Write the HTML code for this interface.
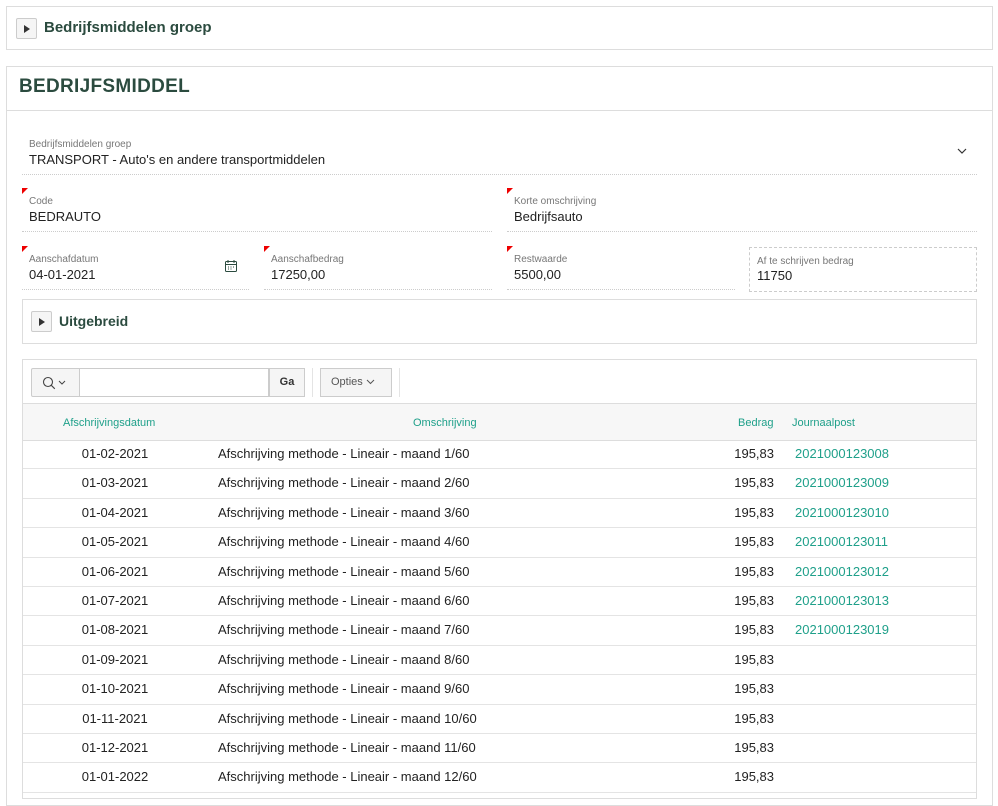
<!DOCTYPE html>
<html><head><meta charset="utf-8"><style>
*{box-sizing:border-box;margin:0;padding:0}
body{width:998px;height:788px;overflow:hidden;background:#fff;font-family:"Liberation Sans",sans-serif;color:#222;position:relative}
.abs{position:absolute}
.box{position:absolute;border:1px solid #ddd;background:#fff}
.tog{position:absolute;width:21px;height:21px;border:1px solid #ccc;border-radius:2px;background:#f5f5f5}
.tog:after{content:"";position:absolute;left:7px;top:6px;border-left:6px solid #333;border-top:4px solid transparent;border-bottom:4px solid transparent}
.h{color:#2b4b3f;font-weight:bold}
.f{position:absolute;border-bottom:1px dotted #ccc}
.lab{position:absolute;left:7px;top:8px;font-size:10px;color:#777}
.val{position:absolute;left:7px;top:21px;font-size:13px;color:#222}
.req:before{content:"";position:absolute;left:0;top:0;border-top:6px solid #e00;border-right:6px solid transparent}
.row{position:absolute;left:23px;width:953px;height:29.4px;border-bottom:1px solid #e4e4e4;font-size:13px}
.row span{position:absolute;top:6px}
.d{left:0;width:184px;text-align:center}
.o{left:195px}
.b{right:202px}
.j{left:772px;color:#1fa08a}
.th{position:absolute;top:13px;font-size:11px;color:#1fa08a}
</style></head><body>
<div class="box" style="left:6px;top:6px;width:987px;height:44px">
<div class="tog" style="left:9px;top:11px"></div>
<div class="abs h" style="left:37px;top:12px;font-size:15px">Bedrijfsmiddelen groep</div>
</div>
<div class="box" style="left:6px;top:66px;width:987px;height:740px">
<div class="abs h" style="left:12px;top:9px;font-size:19px;letter-spacing:0.3px">BEDRIJFSMIDDEL</div>
<div class="abs" style="left:0;top:43px;width:985px;border-top:1px solid #ddd"></div>
</div>
<div class="f" style="left:22px;top:131px;width:955px;height:44px"><div class="lab">Bedrijfsmiddelen groep</div><div class="val">TRANSPORT - Auto's en andere transportmiddelen</div>
<svg class="abs" style="right:10px;top:17px" width="10" height="7" viewBox="0 0 10 7"><path d="M1 1l4 4 4-4" fill="none" stroke="#333" stroke-width="1.2"/></svg></div>
<div class="f req" style="left:22px;top:188px;width:470px;height:44px"><div class="lab">Code</div><div class="val">BEDRAUTO</div></div>
<div class="f req" style="left:507px;top:188px;width:470px;height:44px"><div class="lab">Korte omschrijving</div><div class="val">Bedrijfsauto</div></div>
<div class="f req" style="left:22px;top:246px;width:227px;height:44px"><div class="lab">Aanschafdatum</div><div class="val">04-01-2021</div>
<svg class="abs" style="left:202px;top:13px" width="14" height="14" viewBox="0 0 14 14"><rect x="1.5" y="2.5" width="11" height="10" rx="1" fill="none" stroke="#2b4b3f"/><path d="M1.5 5.5h11M4 1v3M10 1v3" stroke="#2b4b3f"/><path d="M4 8h1M6.5 8h1M9 8h1M4 10h1M6.5 10h1" stroke="#2b4b3f"/></svg></div>
<div class="f req" style="left:264px;top:246px;width:228px;height:44px"><div class="lab">Aanschafbedrag</div><div class="val">17250,00</div></div>
<div class="f req" style="left:507px;top:246px;width:228px;height:44px"><div class="lab">Restwaarde</div><div class="val">5500,00</div></div>
<div class="abs" style="left:749px;top:247px;width:228px;height:45px;border:1px dashed #ccc"><div class="lab">Af te schrijven bedrag</div><div class="val" style="top:20px">11750</div></div>
<div class="box" style="left:22px;top:299px;width:955px;height:45px">
<div class="tog" style="left:8px;top:11px"></div>
<div class="abs h" style="left:36px;top:13px;font-size:14px">Uitgebreid</div>
</div>
<div class="box" style="left:22px;top:359px;width:955px;height:440px">
<div class="abs" style="left:8px;top:8px;width:49px;height:29px;border:1px solid #ccc;background:#f5f5f5;border-radius:2px 0 0 2px">
<svg class="abs" style="left:10px;top:7px" width="26" height="14" viewBox="0 0 26 14"><circle cx="6" cy="6" r="4.5" fill="none" stroke="#444" stroke-width="1.1"/><path d="M9.3 9.3l3.5 3.5" stroke="#444" stroke-width="1.1"/><path d="M17 5l3 3 3-3" fill="none" stroke="#444"/></svg></div>
<div class="abs" style="left:57px;top:8px;width:189px;height:29px;border:1px solid #ccc;border-left:none"></div>
<div class="abs" style="left:246px;top:8px;width:36px;height:29px;border:1px solid #ccc;background:#f5f5f5;font-size:11px;font-weight:bold;text-align:center;line-height:27px;color:#333">Ga</div>
<div class="abs" style="left:289px;top:8px;height:29px;border-left:1px solid #e4e4e4"></div>
<div class="abs" style="left:297px;top:8px;width:72px;height:29px;border:1px solid #ccc;background:#f5f5f5;font-size:11px;line-height:26px;color:#555;padding-left:10px">Opties <svg width="9" height="6" viewBox="0 0 9 6"><path d="M1 1l3.5 3.5L8 1" fill="none" stroke="#555"/></svg></div>
<div class="abs" style="left:376px;top:8px;height:29px;border-left:1px solid #e4e4e4"></div>
<div class="abs" style="left:0;top:43px;width:953px;height:38px;background:#f7f7f7;border-top:1px solid #ddd;border-bottom:1px solid #ddd">
<span class="th" style="left:40px">Afschrijvingsdatum</span>
<span class="th" style="left:390px">Omschrijving</span>
<span class="th" style="left:715px">Bedrag</span>
<span class="th" style="left:769px">Journaalpost</span>
</div>
</div>
<div class="row" style="top:440px"><span class="d">01-02-2021</span><span class="o">Afschrijving methode - Lineair - maand 1/60</span><span class="b">195,83</span><span class="j">2021000123008</span></div>
<div class="row" style="top:469.4px"><span class="d">01-03-2021</span><span class="o">Afschrijving methode - Lineair - maand 2/60</span><span class="b">195,83</span><span class="j">2021000123009</span></div>
<div class="row" style="top:498.8px"><span class="d">01-04-2021</span><span class="o">Afschrijving methode - Lineair - maand 3/60</span><span class="b">195,83</span><span class="j">2021000123010</span></div>
<div class="row" style="top:528.2px"><span class="d">01-05-2021</span><span class="o">Afschrijving methode - Lineair - maand 4/60</span><span class="b">195,83</span><span class="j">2021000123011</span></div>
<div class="row" style="top:557.6px"><span class="d">01-06-2021</span><span class="o">Afschrijving methode - Lineair - maand 5/60</span><span class="b">195,83</span><span class="j">2021000123012</span></div>
<div class="row" style="top:587px"><span class="d">01-07-2021</span><span class="o">Afschrijving methode - Lineair - maand 6/60</span><span class="b">195,83</span><span class="j">2021000123013</span></div>
<div class="row" style="top:616.4px"><span class="d">01-08-2021</span><span class="o">Afschrijving methode - Lineair - maand 7/60</span><span class="b">195,83</span><span class="j">2021000123019</span></div>
<div class="row" style="top:645.8px"><span class="d">01-09-2021</span><span class="o">Afschrijving methode - Lineair - maand 8/60</span><span class="b">195,83</span></div>
<div class="row" style="top:675.2px"><span class="d">01-10-2021</span><span class="o">Afschrijving methode - Lineair - maand 9/60</span><span class="b">195,83</span></div>
<div class="row" style="top:704.6px"><span class="d">01-11-2021</span><span class="o">Afschrijving methode - Lineair - maand 10/60</span><span class="b">195,83</span></div>
<div class="row" style="top:734px"><span class="d">01-12-2021</span><span class="o">Afschrijving methode - Lineair - maand 11/60</span><span class="b">195,83</span></div>
<div class="row" style="top:763.4px"><span class="d">01-01-2022</span><span class="o">Afschrijving methode - Lineair - maand 12/60</span><span class="b">195,83</span></div>
</body></html>
